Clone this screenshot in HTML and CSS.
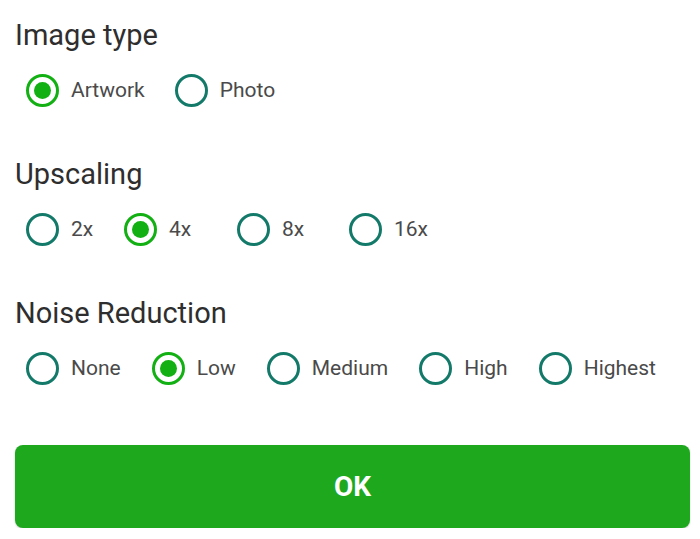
FILE: index.html
```html
<!DOCTYPE html>
<html lang="en">
<head>
    <meta charset="UTF-8">
    <meta name="viewport" content="width=device-width, initial-scale=1.0">
    <title>Image options</title>
    <link rel="stylesheet" href="styles.css">
</head>
<body>

<div class="dialog">
    <!-- Image type -->
    <section class="group">
        <h2>Image type</h2>
        <div class="options">
            <label class="option"><span class="radio checked"></span>Artwork</label>
            <label class="option"><span class="radio"></span>Photo</label>
        </div>
    </section>

    <!-- Upscaling -->
    <section class="group">
        <h2>Upscaling</h2>
        <div class="options scale">
            <label class="option"><span class="radio"></span>2x</label>
            <label class="option"><span class="radio checked"></span>4x</label>
            <label class="option"><span class="radio"></span>8x</label>
            <label class="option"><span class="radio"></span>16x</label>
        </div>
    </section>

    <!-- Noise Reduction -->
    <section class="group">
        <h2>Noise Reduction</h2>
        <div class="options noise">
            <label class="option"><span class="radio"></span>None</label>
            <label class="option"><span class="radio checked"></span>Low</label>
            <label class="option"><span class="radio"></span>Medium</label>
            <label class="option"><span class="radio"></span>High</label>
            <label class="option"><span class="radio"></span>Highest</label>
        </div>
    </section>

    <button class="ok">OK</button>
</div>

</body>
</html>
```

FILE: styles.css
```css
/* Estilos globais */
* {
    margin: 0;
    padding: 0;
    box-sizing: border-box;
}

body {
    font-family: Roboto, 'Liberation Sans', sans-serif;
    background-color: #fff;
    color: #333;
}

.dialog {
    padding: 19px 10px 0 15px;
}

.group {
    margin-bottom: 50px;
}

h2 {
    font-size: 29px;
    font-weight: 400;
    line-height: 32px;
    color: #2e2e2e;
    margin-bottom: 21px;
}

.options {
    display: flex;
    align-items: center;
    height: 36px;
    padding-left: 11px;
}

.options.scale {
    display: grid;
    grid-template-columns: 98px 113px 112px auto;
}

.option {
    display: flex;
    align-items: center;
    font-size: 21px;
    color: #4a4a4a;
    margin-right: 30px;
}

.noise .option {
    margin-right: 31px;
}

.scale .option {
    margin-right: 0;
}

.radio {
    width: 33px;
    height: 33px;
    border: 3px solid #137a6a;
    border-radius: 50%;
    margin-right: 12px;
    display: flex;
    align-items: center;
    justify-content: center;
}

.radio.checked {
    border-color: #12b012;
}

.radio.checked::after {
    content: '';
    width: 17px;
    height: 17px;
    border-radius: 50%;
    background-color: #12b012;
}

/* Botão OK */
.ok {
    display: block;
    width: 100%;
    height: 83px;
    margin-top: 59px;
    background-color: #1ea81e;
    color: #fff;
    border: none;
    border-radius: 8px;
    font-family: Roboto, 'Liberation Sans', sans-serif;
    font-size: 28px;
    font-weight: 700;
    box-shadow: 0 1px 2px rgba(0, 0, 0, 0.2);
}
```
